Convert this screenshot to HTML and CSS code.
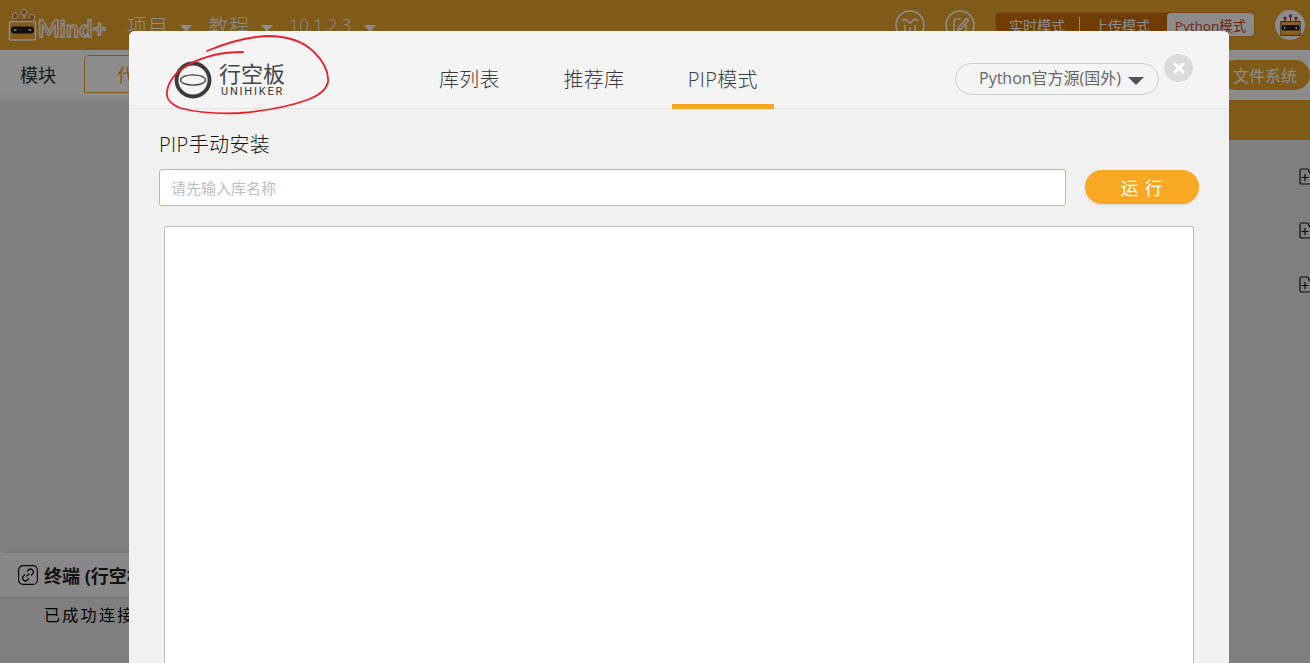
FILE: index.html
```html
<!DOCTYPE html>
<html lang="zh-CN">
<head>
<meta charset="utf-8">
<title>Mind+</title>
<link rel="stylesheet" href="styles.css">
</head>
<body>
<div class="app">
  <header class="topbar">
    <div class="brand">
      <svg class="robot" viewBox="0 0 30 32" width="30" height="32">
        <g stroke="#fff" stroke-width="1.200"><path d="M7 12L7 7M16 12V3M24 12V8"/></g>
        <circle cx="7" cy="7" r="2.800" fill="#d86a30" stroke="#fff"/><circle cx="16" cy="3.200" r="2.800" fill="#d86a30" stroke="#fff"/><circle cx="24" cy="8" r="2.800" fill="#d86a30" stroke="#fff"/>
        <rect x="6" y="10" width="19" height="3" fill="#d87a1c"/>
        <rect x="1.500" y="12.500" width="26" height="18.500" rx="1" fill="#eea836" stroke="#fff" stroke-width="1.500"/>
        <rect x="3" y="17.500" width="23" height="7" rx="3" fill="#1c1c1c"/>
        <path d="M5.500 20l4 .8-3 1.500zM23.500 20l-4 .8 3 1.500z" fill="#fff"/>
      </svg>
      <span class="brand-name">Mind+</span>
    </div>
    <nav class="menu">
      <span class="menu-item">项目<i class="caret"></i></span>
      <span class="menu-item">教程<i class="caret"></i></span>
      <span class="menu-item menu-version">10.1.2.3<i class="caret"></i></span>
    </nav>
    <div class="top-right">
      <span class="round-icon">
        <svg viewBox="0 0 30 30" width="30" height="30" fill="none" stroke="#fff" stroke-width="1.600"><circle cx="15" cy="15" r="14"/><path d="M7 11c2-2.500 4-2 6 .5l2 1.500 2-1.500c2-2.500 4-3 6-.5M10 15v8M15 17v6M20 15v8"/></svg>
      </span>
      <span class="round-icon">
        <svg viewBox="0 0 30 30" width="30" height="30" fill="none" stroke="#fff" stroke-width="1.600"><circle cx="15" cy="15" r="14"/><path d="M16 9H10.500A1.500 1.500 0 0 0 9 10.500v10A1.500 1.500 0 0 0 10.500 22h9a1.500 1.500 0 0 0 1.500-1.500V15M14 17l7.500-8.500 2 2L16 19l-3 .8z"/></svg>
      </span>
      <div class="modes">
        <span class="mode">实时模式</span>
        <span class="mode-sep"></span>
        <span class="mode">上传模式</span>
        <span class="mode mode-active">Python模式</span>
      </div>
      <span class="avatar">
        <svg viewBox="0 0 30 32" width="21" height="22">
          <g stroke="#a33" stroke-width="1.600"><path d="M7 12V6M15 12V3M23 12V6"/></g>
          <circle cx="7" cy="6" r="2.500" fill="#b04a2a"/><circle cx="15" cy="3" r="2.500" fill="#b04a2a"/><circle cx="23" cy="6" r="2.500" fill="#b04a2a"/>
          <rect x="1" y="11" width="28" height="20" fill="#ffb030" stroke="#222"/>
          <rect x="2" y="16" width="26" height="8" rx="3" fill="#1c1c1c"/>
          <path d="M5 19l4 1-3 2zM25 19l-4 1 3 2z" fill="#fff"/>
        </svg>
      </span>
    </div>
  </header>
  <div class="toolbar">
    <span class="tool-label">模块</span>
    <span class="code-tab">代码</span>
    <span class="files-pill">文件系统</span>
  </div>
  <div class="workspace">
    <div class="left-pane">
      <section class="terminal">
        <div class="terminal-head">
          <span class="link-icon">
            <svg viewBox="0 0 20 20" width="20" height="20" fill="none" stroke="#111" stroke-width="1.200"><rect x=".6" y=".6" width="18.800" height="18.800" rx="4.500"/><path d="M8.500 11.500l3-3M9 6.500l1.500-1.500a2.800 2.800 0 0 1 4 4L13 10.500M11 13.500L9.500 15a2.800 2.800 0 0 1-4-4L7 9.500"/></svg>
          </span>
          <span class="terminal-title">终端 (行空板)</span>
        </div>
        <div class="terminal-body">已成功连接</div>
      </section>
    </div>
    <aside class="right-pane">
      <div class="right-strip"></div>
      <ul class="file-list">
        <li><svg viewBox="0 0 17 17" width="17" height="17" fill="none" stroke="#111" stroke-width="1.200"><path d="M9 1H2.500A1.500 1.500 0 0 0 1 2.500v12A1.500 1.500 0 0 0 2.500 16h12a1.500 1.500 0 0 0 1.500-1.500V5.500H13A3.500 3.500 0 0 1 9.500 2V1M6 6v7M2.500 9.500h7"/></svg></li>
        <li><svg viewBox="0 0 17 17" width="17" height="17" fill="none" stroke="#111" stroke-width="1.200"><path d="M9 1H2.500A1.500 1.500 0 0 0 1 2.500v12A1.500 1.500 0 0 0 2.500 16h12a1.500 1.500 0 0 0 1.500-1.500V5.500H13A3.500 3.500 0 0 1 9.500 2V1M6 6v7M2.500 9.500h7"/></svg></li>
        <li><svg viewBox="0 0 17 17" width="17" height="17" fill="none" stroke="#111" stroke-width="1.200"><path d="M9 1H2.500A1.500 1.500 0 0 0 1 2.500v12A1.500 1.500 0 0 0 2.500 16h12a1.500 1.500 0 0 0 1.500-1.500V5.500H13A3.500 3.500 0 0 1 9.500 2V1M6 6v7M2.500 9.500h7"/></svg></li>
      </ul>
    </aside>
  </div>

  <div class="scrim"></div>

  <div class="modal">
    <div class="modal-head">
      <div class="logo">
        <svg class="logo-ring" viewBox="0 0 38 38" width="38" height="38" fill="none" stroke="#3c3c3c">
          <circle cx="19" cy="19" r="16.500" stroke-width="3.800"/>
          <ellipse cx="19" cy="19" rx="12.500" ry="5.200" stroke-width="1.200"/>
        </svg>
        <div class="logo-text">
          <span class="logo-cn">行空板</span>
          <span class="logo-en">UNIHIKER</span>
        </div>
      </div>
      <nav class="tabs">
        <span class="tab">库列表</span>
        <span class="tab">推荐库</span>
        <span class="tab tab-active">PIP模式</span>
      </nav>
      <div class="source-select">
        <span class="source-label">Python官方源(国外)</span>
        <i class="select-caret"></i>
      </div>
    </div>
    <div class="modal-body">
      <h2 class="pip-title">PIP手动安装</h2>
      <div class="pip-row">
        <input class="pip-input" type="text" placeholder="请先输入库名称">
        <button class="run-btn" type="button">运 行</button>
      </div>
      <div class="output"></div>
    </div>
  </div>

  <button class="close-btn" type="button" aria-label="关闭">
    <svg viewBox="0 0 12 12" width="12" height="12" stroke="#fff" stroke-width="3" stroke-linecap="round"><path d="M2 2l8 8M10 2l-8 8"/></svg>
  </button>

  <svg class="scribble" viewBox="0 0 1310 663" width="1310" height="663" fill="none" stroke="#e8202c" stroke-width="1.800" stroke-linecap="round">
    <path d="M207 51C226 43 246 37 267 36C288 36 304 42 314 52C324 62 329 72 328 82C326 91 318 96 307 100C290 106 265 111 240 113C216 114 195 112 180 108C170 104 166 98 167 92C168 82 176 72 188 65C204 56 224 52 243 52"/>
  </svg>
</div>
</body>
</html>
```
FILE: styles.css
```css
* { box-sizing: border-box; }
html, body { margin: 0; padding: 0; height: 100%; overflow: hidden; }
body { font-family: "Open Sans", "Noto Sans CJK SC", sans-serif; }
ul { list-style: none; margin: 0; padding: 0; }

.app {
  position: relative;
  width: 1310px;
  height: 663px;
  overflow: hidden;
  display: flex;
  flex-direction: column;
  background: #e8e8e8;
}

/* Top bar */
.topbar {
  height: 50px;
  flex: none;
  display: flex;
  align-items: center;
  background: #e7a42f;
  color: #fff;
  padding-left: 8px;
}
.brand { display: flex; align-items: center; width: 119px; }
.robot { flex: none; }
.brand-name {
  font: 700 23px "Lato", sans-serif;
  letter-spacing: 0.300px;
  color: #ea9430;
  -webkit-text-stroke: 1.400px #fff;
  margin: 6px 0 0 0;
}
.menu { display: flex; gap: 16px; font-size: 20px; font-weight: 300; }
.menu-item { display: flex; align-items: center; gap: 11px; letter-spacing: 1px; }
.menu-version { font-size: 17.500px; letter-spacing: 0; gap: 13px; }
.caret {
  width: 0;
  height: 0;
  margin-top: 7px;
  border: 6px solid transparent;
  border-top: 7px solid #fff;
  border-bottom: 0;
}
.top-right { margin-left: auto; display: flex; align-items: center; height: 100%; padding-right: 5px; }
.round-icon { display: flex; width: 30px; height: 30px; margin-right: 20px; }
.modes {
  display: flex;
  align-items: center;
  height: 25px;
  width: 260px;
  margin: -1px 20px 0 0;
  padding-left: 13px;
  background: #cd6d0b;
  border: 1px solid #e88c34;
  border-radius: 4px;
  font-size: 14px;
}
.mode-sep { width: 1px; height: 16px; background: #fff; margin: 0 14px; }
.mode-active {
  margin-left: auto;
  height: 100%;
  width: 87px;
  display: flex;
  align-items: center;
  justify-content: center;
  font-size: 13.500px;
  background: #fff;
  color: #d04824;
  border-radius: 4px;
}
.avatar {
  width: 30px;
  height: 30px;
  border-radius: 50%;
  background: #fff;
  display: flex;
  align-items: center;
  justify-content: center;
}

/* Toolbar */
.toolbar {
  height: 50px;
  flex: none;
  display: flex;
  align-items: center;
  background: #fff;
  box-shadow: inset 0 -7px 0 #fbfbfb;
  font-size: 18px;
  color: #333;
  padding-left: 20px;
}
.tool-label { width: 64px; margin-top: -2px; }
.code-tab {
  height: 38px;
  width: 120px;
  align-self: flex-start;
  margin-top: 5px;
  padding: 5px 0 0 32px;
  color: #ff9a1f;
  background: #fff;
  border: 1px solid #e7a42f;
  border-radius: 5px 5px 0 0;
}
.files-pill {
  margin-left: auto;
  height: 30px;
  width: 90px;
  padding: 0 0 1px 13px;
  display: flex;
  align-items: center;
  font-size: 16px;
  color: #fff;
  background: #e7a42f;
  border-radius: 15px;
}

/* Workspace */
.workspace { flex: 1; display: flex; min-height: 0; }
.left-pane { flex: 1; display: flex; flex-direction: column; justify-content: flex-end; }
.terminal {
  height: 112px;
  border-top: 2px solid #d2d2d2;
  border-top-left-radius: 10px;
  background: #e8e8e8;
}
.terminal-head {
  height: 45px;
  display: flex;
  align-items: center;
  gap: 6px;
  padding-left: 18px;
  background: #f8f8f8;
  border-bottom: 1px solid #d2d2d2;
}
.link-icon { display: flex; width: 20px; height: 20px; }
.terminal-title { font-size: 18px; font-weight: 700; color: #222; white-space: nowrap; }
.terminal-body { padding: 4px 0 0 44px; font-size: 16px; letter-spacing: 2.300px; color: #000; }

.right-pane { width: 81px; flex: none; }
.right-strip { height: 40px; background: #e7a42f; }
.file-list { padding: 28px 0 0 70px; display: flex; flex-direction: column; gap: 37px; }
.file-list li { display: flex; width: 17px; height: 17px; }

/* Scrim */
.scrim { position: absolute; inset: 0; background: rgba(0, 0, 0, 0.45); }

/* Modal */
.modal {
  position: absolute;
  left: 129px;
  top: 31px;
  width: 1100px;
  height: 680px;
  background: #f1f1f1;
  border-radius: 6px 6px 0 0;
  display: flex;
  flex-direction: column;
}
.modal-head {
  height: 78px;
  flex: none;
  display: flex;
  background: #f4f4f4;
  border-radius: 6px 6px 0 0;
  border-bottom: 1px solid #e2e2e2;
}
.logo { width: 310px; display: flex; align-items: flex-start; padding: 30px 0 0 45px; gap: 7px; }
.logo-ring { flex: none; }
.logo-text { display: flex; flex-direction: column; margin-top: -1px; }
.logo-cn { font: 400 22px/24px "Noto Sans CJK SC", sans-serif; color: #444; white-space: nowrap; }
.logo-en { font: 400 11px/12px "Roboto", sans-serif; letter-spacing: 1.800px; color: #333; margin: 2px 0 0 2px; }
.tabs { display: flex; gap: 63.500px; align-self: stretch; }
.tab {
  display: flex;
  align-items: center;
  padding-top: 17px;
  font-size: 20px;
  font-weight: 300;
  letter-spacing: 0.300px;
  color: #3a3a3a;
  position: relative;
}
.tab-active::after {
  content: "";
  position: absolute;
  left: -16px;
  right: -16px;
  bottom: -1px;
  height: 5px;
  background: #f8a823;
}
.source-select {
  margin: 32px 70px 0 auto;
  width: 204px;
  height: 32px;
  padding-left: 23px;
  display: flex;
  align-items: center;
  gap: 7px;
  font-size: 16px;
  color: #666;
  white-space: nowrap;
  border: 1px solid #ccc;
  border-radius: 16px;
}
.source-label { margin-top: -5px; }
.select-caret {
  flex: none;
  margin-top: 3px;
  width: 0;
  height: 0;
  border: 8.500px solid transparent;
  border-top: 8px solid #555;
  border-bottom: 0;
}
.close-btn {
  position: absolute;
  left: 1164px;
  top: 54px;
  width: 29px;
  height: 28px;
  padding: 0;
  border: 0;
  border-radius: 50%;
  background: #dcdcdc;
  display: flex;
  align-items: center;
  justify-content: center;
}
.modal-body { flex: 1; display: flex; flex-direction: column; padding: 22px 30px 0; min-height: 0; }
.pip-title { margin: 0; font-size: 20px; font-weight: 300; letter-spacing: 0.400px; line-height: 28px; color: #111; }
.pip-row { display: flex; align-items: flex-start; gap: 19px; margin-top: 10px; }
.pip-input {
  width: 907px;
  height: 37px;
  padding: 0 11px;
  border: 1px solid #f7ae45;
  border-radius: 3px;
  background: #fff;
  font: 15px "Open Sans", "Noto Sans CJK SC", sans-serif;
  outline: none;
}
.pip-input::placeholder { color: #bdbdbd; }
.run-btn {
  width: 114px;
  height: 34px;
  margin-top: 1px;
  border: 0;
  border-radius: 17px;
  background: #f8a823;
  color: #fff;
  font: 18px "Noto Sans CJK SC", sans-serif;
  letter-spacing: 1px;
  box-shadow: 0 1px 2px rgba(0, 0, 0, 0.12);
}
.output {
  flex: 1;
  margin: 20px 5px 0 5px;
  background: #fff;
  border: 1px solid #bbb;
  border-radius: 2px 2px 0 0;
}
.scribble { position: absolute; left: 0; top: 0; pointer-events: none; }
```
